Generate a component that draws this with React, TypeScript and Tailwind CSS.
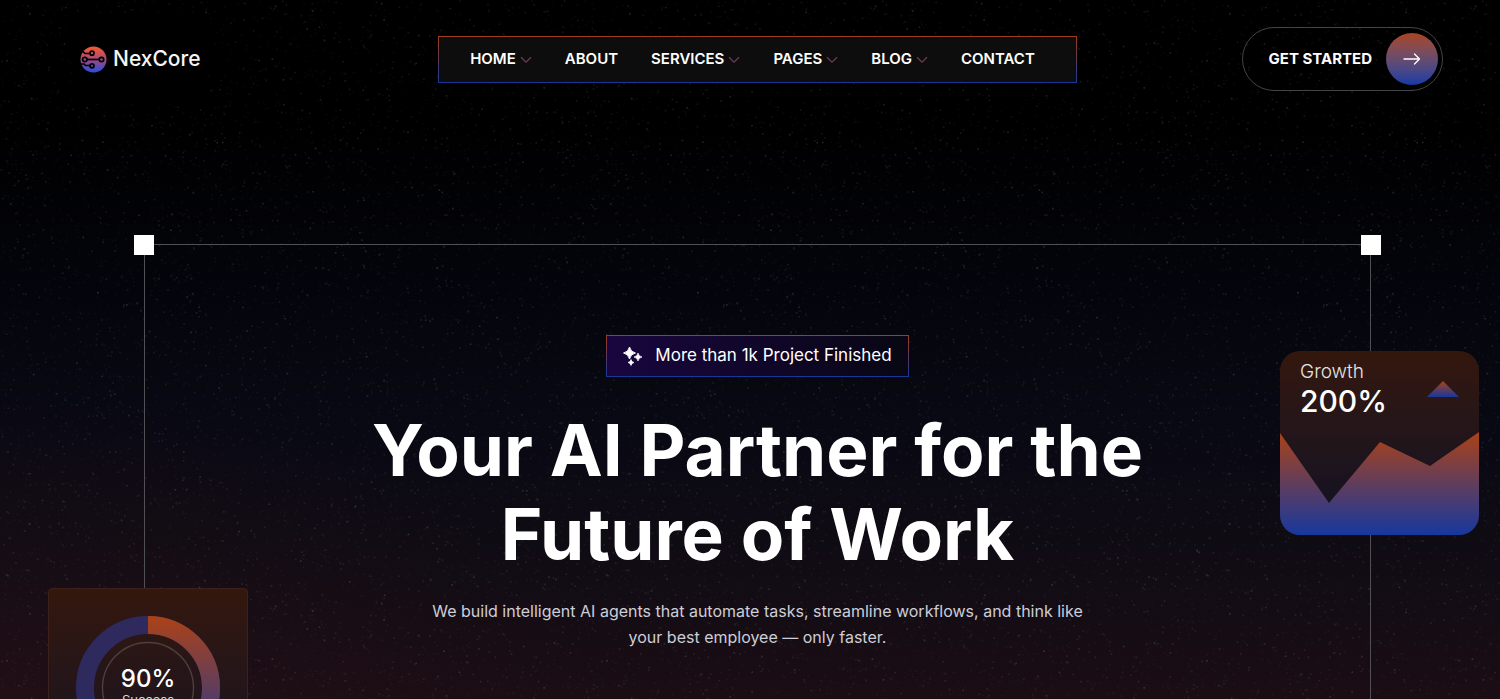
import { clsx } from 'clsx';

interface INavLink {
  label: string;
  href: string;
  hasMenu?: boolean;
}

const navLinks: INavLink[] = [
  { label: 'HOME', href: '#home', hasMenu: true },
  { label: 'ABOUT', href: '#about' },
  { label: 'SERVICES', href: '#services', hasMenu: true },
  { label: 'PAGES', href: '#pages', hasMenu: true },
  { label: 'BLOG', href: '#blog', hasMenu: true },
  { label: 'CONTACT', href: '#contact' }
];

const STAR_TILE = 600;

// small seeded generator, so the sky is the same on every render
function createStars(seed: number, count: number, size: number) {
  let state = seed;
  const next = () => {
    state = (state * 1664525 + 1013904223) % 4294967296;
    return state / 4294967296;
  };
  let d = '';
  for (let i = 0; i < count; i++) {
    const x = (next() * STAR_TILE).toFixed(1);
    const y = (next() * STAR_TILE).toFixed(1);
    d += `M${x} ${y}h${size}v${size}h-${size}z`;
  }
  return d;
}

const faintStars = createStars(7, 3600, 1.4);
const midStars = createStars(41, 1200, 1.6);
const brightStars = createStars(99, 160, 1.6);

function StarField() {
  return (
    <svg className="pointer-events-none absolute inset-0 -z-10 h-full w-full" aria-hidden="true">
      <defs>
        <pattern id="stars" width={STAR_TILE} height={STAR_TILE} patternUnits="userSpaceOnUse">
          <path d={faintStars} fill="#fff" opacity="0.04" />
          <path d={midStars} fill="#fff" opacity="0.08" />
          <path d={brightStars} fill="#fff" opacity="0.13" />
        </pattern>
      </defs>
      <rect width="100%" height="100%" fill="url(#stars)" />
    </svg>
  );
}

function Logo() {
  return (
    <a
      href="#home"
      className="flex h-[90px] w-[136px] items-center gap-1.5 justify-self-start bg-black pl-2 text-[21px] font-medium text-neutral-100"
    >
      <svg viewBox="0 0 27 27" className="h-[27px] w-[27px] shrink-0" aria-hidden="true">
        <defs>
          <linearGradient id="logoFill" x1="0" y1="0" x2="0" y2="1">
            <stop offset="0" stopColor="#fb5a2c" />
            <stop offset="0.5" stopColor="#a2497c" />
            <stop offset="1" stopColor="#2350e6" />
          </linearGradient>
        </defs>
        <circle cx="13.5" cy="13.5" r="13" fill="url(#logoFill)" />
        <g fill="none" stroke="#000" strokeWidth="1.7">
          <path d="M0 5.5H3L5 7.5H10" />
          <circle cx="12" cy="7.2" r="2" />
          <path d="M7 13.5H19.5" />
          <circle cx="4.8" cy="13.5" r="2.2" />
          <circle cx="21.5" cy="13.5" r="2.2" />
          <path d="M1 18H4L5.5 19.5H10" />
          <circle cx="12" cy="19.8" r="2" />
        </g>
      </svg>
      NexCore
    </a>
  );
}

function Chevron() {
  return (
    <svg viewBox="0 0 12 8" className="mt-0.5 h-2 w-3" fill="none" aria-hidden="true">
      <path d="M1 1.2l5 5 5-5" stroke="#6d3c58" strokeWidth="1.3" />
    </svg>
  );
}

function Header() {
  return (
    <header className="grid grid-cols-[1fr_auto_1fr] items-center pt-3.5 pr-[57px] pl-[72px]">
      <Logo />
      <nav
        aria-label="Main"
        className="flex h-[47px] items-center gap-[33px] border border-transparent pr-[41px] pl-[31px] [background:linear-gradient(#0d0d0d,#0d0d0d)_padding-box,linear-gradient(#a23c1a,#17379a)_border-box]"
      >
        {navLinks.map(({ label, href, hasMenu }) => (
          <a
            key={label}
            href={href}
            className={clsx('flex items-center text-[15px] font-semibold text-white', hasMenu && 'gap-1')}
          >
            {label}
            {hasMenu && <Chevron />}
          </a>
        ))}
      </nav>
      <a
        href="#start"
        className="flex items-center gap-3.5 justify-self-end rounded-full border border-[#444] py-[5px] pr-1 pl-[26px] text-[15px] font-bold text-white"
      >
        GET STARTED
        <span className="flex h-[52px] w-[52px] items-center justify-center rounded-full bg-linear-to-b from-[#ab4218] to-[#1738a5]">
          <svg viewBox="0 0 18 12" className="h-3 w-[18px]" fill="none" aria-hidden="true">
            <path d="M1 6h15.5M11.5 1l5 5-5 5" stroke="#fff" strokeWidth="1.3" strokeLinecap="round" strokeLinejoin="round" />
          </svg>
        </span>
      </a>
    </header>
  );
}

function GrowthCard() {
  return (
    <div className="absolute top-[106px] -right-[109px] h-[184px] w-[199px] overflow-hidden rounded-[20px] bg-linear-to-b from-[#34170d] to-[#0f1024] text-left">
      <div className="flex items-end justify-between px-5 pt-[9px]">
        <div>
          <p className="text-[19px] leading-[23px] font-light text-neutral-200">Growth</p>
          <p className="text-[30px] leading-9 font-medium text-white">200%</p>
        </div>
        <svg viewBox="0 0 32 16" className="mb-[22px] h-4 w-8" aria-hidden="true">
          <path d="M16 0l16 16H0z" fill="url(#heat)" />
        </svg>
      </div>
      <svg
        viewBox="0 0 199 104"
        preserveAspectRatio="none"
        className="absolute inset-x-0 bottom-0 h-[104px] w-full"
        aria-hidden="true"
      >
        <defs>
          <linearGradient id="heat" x1="0" y1="0" x2="0" y2="1">
            <stop offset="0" stopColor="#ab4218" />
            <stop offset="1" stopColor="#17389e" />
          </linearGradient>
        </defs>
        <path d="M0 2L49 72L100 11L150 35L199 1V104H0z" fill="url(#heat)" />
      </svg>
    </div>
  );
}

function SuccessCard() {
  return (
    <div className="absolute top-[343px] -left-[97px] h-[220px] w-[200px] rounded border border-[#3d2019] bg-linear-to-b from-[#34170d] to-[#0f1024] pt-[27px]">
      <div className="relative mx-auto h-36 w-36">
        <svg viewBox="0 0 144 144" className="h-36 w-36" fill="none" aria-hidden="true">
          <defs>
            <linearGradient id="ring" gradientUnits="userSpaceOnUse" x1="0" y1="0" x2="0" y2="144">
              <stop offset="0" stopColor="#ab4218" />
              <stop offset="1" stopColor="#17389e" />
            </linearGradient>
          </defs>
          <circle cx="72" cy="72" r="63" stroke="#2f2a5e" strokeWidth="18" />
          <path d="M72 9a63 63 0 0 1 0 126" stroke="url(#ring)" strokeWidth="18" />
          <circle cx="72" cy="72" r="45.5" stroke="#51403f" strokeWidth="1.3" />
        </svg>
        <div className="absolute inset-0 flex flex-col items-center pt-[49px] text-white">
          <span className="text-2xl leading-7 font-medium">90%</span>
          <span className="text-[13px] leading-[14px] text-neutral-300">Success</span>
        </div>
      </div>
    </div>
  );
}

function Sparkles() {
  return (
    <svg viewBox="0 0 20 20" className="h-5 w-5" fill="#fff" stroke="#fff" strokeLinejoin="round" aria-hidden="true">
      <path d="M6.5 1Q7.6 6 12.5 7Q7.6 8 6.5 13Q5.4 8 .5 7Q5.4 6 6.5 1z" strokeWidth="0.9" />
      <path d="M15 7Q15.7 10.4 19 11Q15.7 11.6 15 15Q14.3 11.6 11 11Q14.3 10.4 15 7z" strokeWidth="0.7" />
      <path d="M8 13.5Q8.5 16 11 16.5Q8.5 17 8 19.5Q7.5 17 5 16.5Q7.5 16 8 13.5z" strokeWidth="0.7" />
    </svg>
  );
}

function Hero() {
  return (
    <main className="mt-[140px] mr-[129px] ml-36 flex flex-1 flex-col">
      <div className="relative flex flex-1 flex-col items-center border-x border-t border-[#505054] pt-[90px] pb-12 text-center">
        <span className="absolute -top-2.5 -left-[11px] h-5 w-5 bg-white" />
        <span className="absolute -top-2.5 -right-[11px] h-5 w-5 bg-white" />
        <GrowthCard />
        <SuccessCard />

        <p className="flex h-[42px] items-center gap-3 border border-transparent px-4 text-[17px] text-white [background:linear-gradient(90deg,#19063f,#080713)_padding-box,linear-gradient(#a23c1a,#17379a)_border-box]">
          <Sparkles />
          More than 1k Project Finished
        </p>
        <h1 className="mt-[31px] text-[71px] leading-[84px] font-bold text-white">
          Your AI Partner for the
          <br />
          Future of Work
        </h1>
        <p className="mt-[22px] text-base leading-[26px] text-[#cdced6]">
          We build intelligent AI agents that automate tasks, streamline workflows, and think like
          <br />
          your best employee — only faster.
        </p>
      </div>
    </main>
  );
}

export default function App() {
  return (
    <div className="relative isolate flex min-h-screen flex-col overflow-hidden bg-[radial-gradient(ellipse_40%_45%_at_0%_100%,#2b111866,transparent),linear-gradient(#000_0%,#000_18%,#04050c_42%,#090913_62%,#110c14_82%,#1b0d14_100%)] font-['Inter',sans-serif]">
      <StarField />
      <Header />
      <Hero />
    </div>
  );
}
